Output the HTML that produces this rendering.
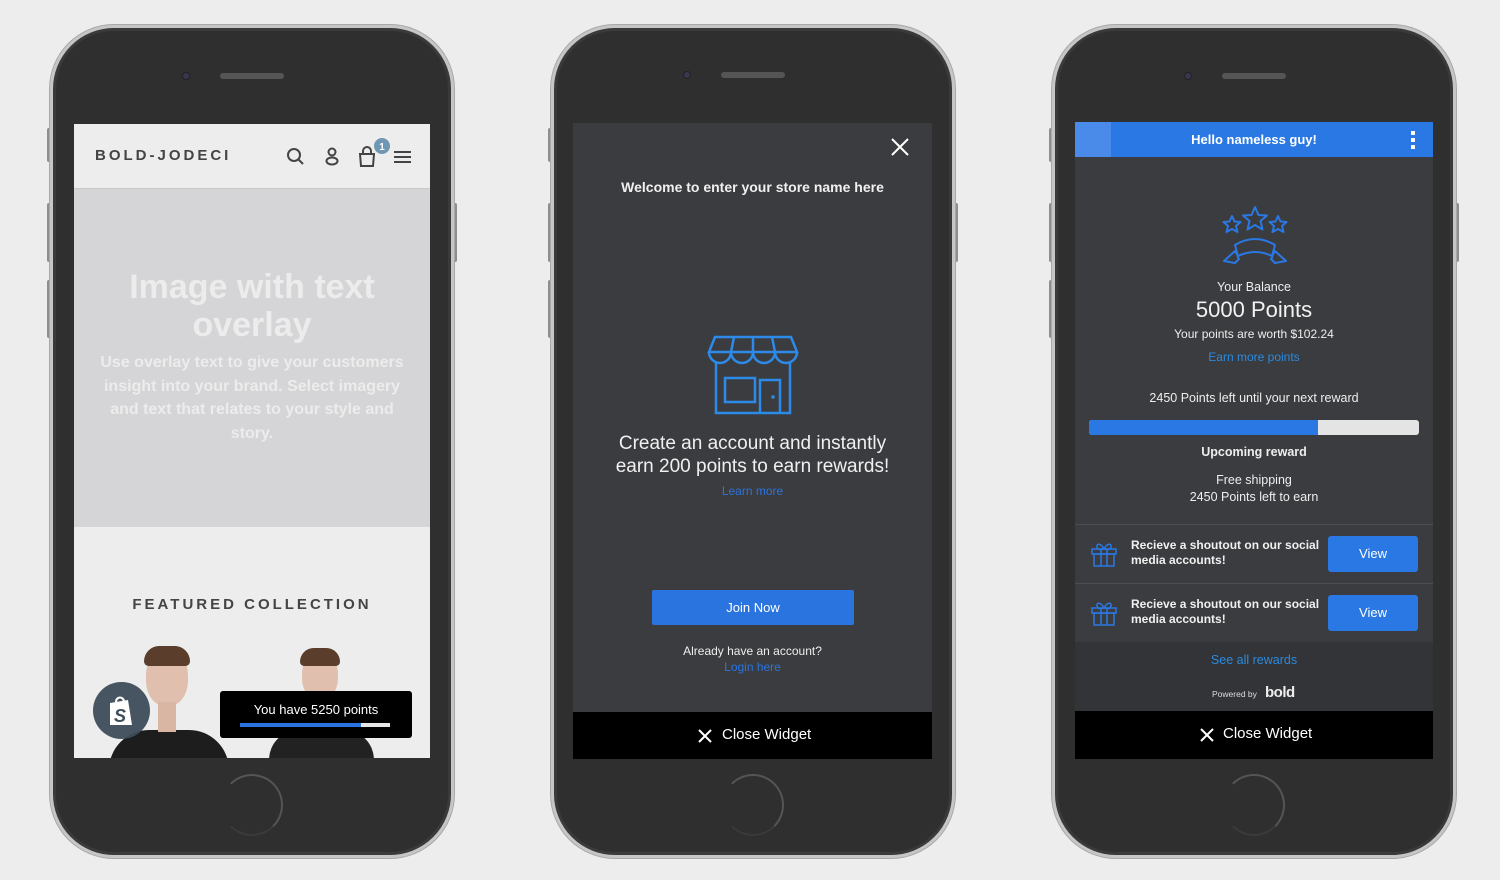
<!DOCTYPE html>
<html><head><meta charset="utf-8"><style>
*{margin:0;padding:0;box-sizing:border-box}
body{width:1500px;height:880px;background:#ededed;position:relative;overflow:hidden;font-family:"Liberation Sans",sans-serif}
.a{position:absolute}
.phone{position:absolute;width:404px;height:833px;border-radius:64px;background:#2f2f2f;border:3px solid #c6c6c6;box-shadow:0 0 0 1px #a9a9a9,inset 0 0 0 3px #3a3a3a}
.btn{position:absolute;background:#8e8e8e;width:4px;border-radius:2px}
.cam{position:absolute;width:8px;height:8px;border-radius:50%;background:#3a3550;border:1px solid #222}
.spk{position:absolute;width:64px;height:6px;border-radius:3px;background:#555}
.home{position:absolute;width:62px;height:62px;border-radius:50%;border:2px solid #555;border-left-color:#2f2f2f;border-bottom-color:#3a3a3a}
.c{text-align:center;color:#eee}
</style></head><body>

<!-- PHONE 1 -->
<div class="btn" style="left:47px;top:128px;height:34px"></div>
<div class="btn" style="left:47px;top:203px;height:59px"></div>
<div class="btn" style="left:47px;top:280px;height:58px"></div>
<div class="btn" style="left:453px;top:203px;height:59px"></div>
<div class="phone" style="left:50px;top:25px"></div>
<div class="cam" style="left:182px;top:72px"></div>
<div class="spk" style="left:220px;top:73px"></div>
<div class="home" style="left:221px;top:774px"></div>
<div class="a" style="left:74px;top:124px;width:356px;height:634px;background:#ededed;overflow:hidden">
  <div class="a" style="left:21px;top:23px;font-size:15px;font-weight:bold;letter-spacing:3px;color:#444">BOLD-JODECI</div>
  <svg class="a" style="left:210px;top:14px" width="130" height="32" viewBox="0 -6 130 32">
    <g fill="none" stroke="#444" stroke-width="2">
      <circle cx="10" cy="11" r="6"/><path d="M14.5 15.5L19 20"/>
      <circle cx="48" cy="8" r="3.5"/><ellipse cx="48" cy="17" rx="5.5" ry="3.5"/>
      <path d="M76 10h14l-1 12H77z M79 10v-3a4 4 0 0 1 8 0v3"/>
      <path d="M110 8h17M110 13h17M110 18h17"/>
    </g>
    <circle cx="98" cy="2" r="8" fill="#6f97b3"/>
    <text x="98" y="6" font-size="10" fill="#fff" text-anchor="middle" font-weight="bold" font-family="Liberation Sans">1</text>
  </svg>
  <div class="a" style="left:0;top:64px;width:356px;height:339px;background:#d5d5d7;border-top:1px solid #c8c8c8"></div>
  <div class="a c" style="left:0;top:144px;width:356px;font-size:34px;font-weight:bold;line-height:38px;color:#ececec">Image with text<br>overlay</div>
  <div class="a c" style="left:14px;top:227px;width:328px;font-size:16px;font-weight:bold;line-height:23.5px;color:#ececec">Use overlay text to give your customers insight into your brand. Select imagery and text that relates to your style and story.</div>
  <div class="a c" style="left:0;top:472px;width:356px;font-size:15px;font-weight:bold;letter-spacing:3px;color:#444">FEATURED COLLECTION</div>
  <!-- people -->
  <div class="a" style="left:35px;top:606px;width:120px;height:40px;border-radius:40px 40px 0 0;background:#1d1d1d"></div>
  <div class="a" style="left:72px;top:526px;width:42px;height:56px;border-radius:45%;background:#e0bfae"></div>
  <div class="a" style="left:70px;top:522px;width:46px;height:20px;border-radius:20px 20px 6px 6px;background:#5a3e2b"></div>
  <div class="a" style="left:84px;top:578px;width:18px;height:30px;background:#d9b5a3"></div>
  <div class="a" style="left:195px;top:606px;width:105px;height:40px;border-radius:30px 30px 0 0;background:#222"></div>
  <div class="a" style="left:228px;top:528px;width:36px;height:48px;border-radius:45%;background:#e0bfae"></div>
  <div class="a" style="left:226px;top:524px;width:40px;height:18px;border-radius:20px 20px 6px 6px;background:#5a3e2b"></div>
  <div class="a" style="left:19px;top:558px;width:57px;height:57px;border-radius:50%;background:#3d4d5a;opacity:.95"></div>
  <svg class="a" style="left:32px;top:570px" width="30" height="34" viewBox="0 0 30 34"><path d="M4 9l18-3 4 25-22 0z" fill="#fff"/><path d="M10 8c0-6 8-6 8 0" stroke="#fff" stroke-width="2" fill="none"/><text x="14" y="28" font-size="18" font-weight="bold" fill="#3d4d5a" text-anchor="middle" font-style="italic" font-family="Liberation Sans">S</text></svg>
  <div class="a" style="left:146px;top:567px;width:192px;height:47px;background:#000;border-radius:3px"></div>
  <div class="a c" style="left:146px;top:578px;width:192px;font-size:13px;color:#fff">You have 5250 points</div>
  <div class="a" style="left:166px;top:599px;width:150px;height:4px;background:#e5e5e5"></div>
  <div class="a" style="left:166px;top:599px;width:121px;height:4px;background:#2a74e0"></div>
</div>

<!-- PHONE 2 -->
<div class="btn" style="left:548px;top:128px;height:34px"></div>
<div class="btn" style="left:548px;top:203px;height:59px"></div>
<div class="btn" style="left:548px;top:280px;height:58px"></div>
<div class="btn" style="left:954px;top:203px;height:59px"></div>
<div class="phone" style="left:551px;top:25px"></div>
<div class="cam" style="left:683px;top:71px"></div>
<div class="spk" style="left:721px;top:72px"></div>
<div class="home" style="left:722px;top:774px"></div>
<div class="a" style="left:573px;top:123px;width:359px;height:636px;background:#3b3c3f;overflow:hidden">
  <svg class="a" style="left:318px;top:15px" width="18" height="18"><path d="M1 1L17 17M17 1L1 17" stroke="#fff" stroke-width="2"/></svg>
  <div class="a c" style="left:0;top:56px;width:359px;font-size:14px;font-weight:bold;color:#f0f0f0">Welcome to enter your store name here</div>
  <svg class="a" style="left:134px;top:212px" width="92" height="80" viewBox="0 0 92 80"><g fill="none" stroke="#2d8ae8" stroke-width="2.5">
    <path d="M8 2h76l6 15H2z M2 17a11 11 0 0 0 22 0a11 11 0 0 0 22 0a11 11 0 0 0 22 0a11 11 0 0 0 22 0 M24 17l3-15M46 17V2M68 17l-3-15"/>
    <path d="M9 27v51h74V27"/><rect x="18" y="43" width="30" height="24"/><path d="M53 78V45h20v33"/></g>
    <circle cx="66" cy="62" r="1.8" fill="#2d8ae8"/></svg>
  <div class="a c" style="left:0;top:309px;width:359px;font-size:19px;line-height:23px;color:#f0f0f0">Create an account and instantly<br>earn 200 points to earn rewards!</div>
  <div class="a c" style="left:0;top:361px;width:359px;font-size:12px;color:#2a74e0">Learn more</div>
  <div class="a c" style="left:79px;top:467px;width:202px;height:35px;background:#2a74e0;border-radius:2px;font-size:13px;line-height:35px;color:#fff">Join Now</div>
  <div class="a c" style="left:0;top:520px;width:359px;font-size:12px;line-height:16px;color:#eee">Already have an account?<br><span style="color:#2a74e0">Login here</span></div>
  <div class="a" style="left:0;top:589px;width:359px;height:47px;background:#000"></div>
  <svg class="a" style="left:125px;top:606px" width="14" height="14"><path d="M1 1L13 13M13 1L1 13" stroke="#fff" stroke-width="2"/></svg>
  <div class="a" style="left:149px;top:603px;font-size:15px;color:#fff">Close Widget</div>
</div>

<!-- PHONE 3 -->
<div class="btn" style="left:1049px;top:128px;height:34px"></div>
<div class="btn" style="left:1049px;top:203px;height:59px"></div>
<div class="btn" style="left:1049px;top:280px;height:58px"></div>
<div class="btn" style="left:1455px;top:203px;height:59px"></div>
<div class="phone" style="left:1052px;top:25px"></div>
<div class="cam" style="left:1184px;top:72px"></div>
<div class="spk" style="left:1222px;top:73px"></div>
<div class="home" style="left:1223px;top:774px"></div>
<div class="a" style="left:1075px;top:122px;width:358px;height:637px;background:#3b3c3f;overflow:hidden">
  <div class="a" style="left:0;top:0;width:358px;height:35px;background:#2a78e4"></div>
  <div class="a" style="left:0;top:0;width:36px;height:35px;background:#4a8ae8"></div>
  <div class="a c" style="left:0;top:10px;width:358px;font-size:13px;font-weight:bold;color:#fff">Hello nameless guy!</div>
  <div class="a" style="left:336px;top:9px;width:4px;height:4px;background:#fff"></div>
  <div class="a" style="left:336px;top:16px;width:4px;height:4px;background:#fff"></div>
  <div class="a" style="left:336px;top:23px;width:4px;height:4px;background:#fff"></div>
  <svg class="a" style="left:145px;top:83px" width="70" height="68" viewBox="0 0 70 68"><g fill="none" stroke="#2a78e4" stroke-width="2" stroke-linejoin="round">
    <path d="M35 2l3.5 8 8.5 .5-6.5 5.5 2 8.5-7.5-4.5-7.5 4.5 2-8.5-6.5-5.5 8.5-.5z"/>
    <path d="M12 11l2.5 5.5 6 .5-4.5 4 1.5 6-5.5-3-5.5 3 1.5-6-4.5-4 6-.5z"/>
    <path d="M58 11l2.5 5.5 6 .5-4.5 4 1.5 6-5.5-3-5.5 3 1.5-6-4.5-4 6-.5z"/>
    <path d="M15 40q20-12 40 0l-3 11q-17-8-34 0z M18 51l-3-5-11 10 11 2 4-4q-2-2-1-3 M52 51l3-5 11 10-11 2-4-4q2-2 1-3"/></g></svg>
  <div class="a c" style="left:0;top:158px;width:358px;font-size:12.5px;color:#eee">Your Balance</div>
  <div class="a c" style="left:0;top:175px;width:358px;font-size:22px;color:#f2f2f2">5000 Points</div>
  <div class="a c" style="left:0;top:205px;width:358px;font-size:12px;color:#eee">Your points are worth $102.24</div>
  <div class="a c" style="left:0;top:228px;width:358px;font-size:12px;color:#2a8ae0">Earn more points</div>
  <div class="a c" style="left:0;top:269px;width:358px;font-size:12.5px;color:#eee">2450 Points left until your next reward</div>
  <div class="a" style="left:14px;top:298px;width:330px;height:15px;border-radius:3px;background:#e4e4e4;overflow:hidden"><div style="width:229px;height:15px;background:#2a78e4"></div></div>
  <div class="a c" style="left:0;top:323px;width:358px;font-size:12.5px;font-weight:bold;color:#eee">Upcoming reward</div>
  <div class="a c" style="left:0;top:350px;width:358px;font-size:12.5px;line-height:17px;color:#eee">Free shipping<br>2450 Points left to earn</div>
  <div class="a" style="left:0;top:402px;width:358px;height:1px;background:#4d4e52"></div>
  <div class="a" style="left:0;top:461px;width:358px;height:1px;background:#4d4e52"></div>
  <div class="a" style="left:0;top:520px;width:358px;height:70px;background:#333437"></div>
  <svg class="a" style="left:16px;top:419px" width="26" height="26" viewBox="0 0 26 26"><g fill="none" stroke="#2a78e4" stroke-width="1.5"><rect x="1" y="8" width="24" height="5"/><rect x="3" y="13" width="20" height="12"/><path d="M10 8v17M16 8v17M13 8c-3-6-8-6-7-2s5 2 7 2c2 0 6 2 7-2s-4-4-7 2"/></g></svg>
  <svg class="a" style="left:16px;top:478px" width="26" height="26" viewBox="0 0 26 26"><g fill="none" stroke="#2a78e4" stroke-width="1.5"><rect x="1" y="8" width="24" height="5"/><rect x="3" y="13" width="20" height="12"/><path d="M10 8v17M16 8v17M13 8c-3-6-8-6-7-2s5 2 7 2c2 0 6 2 7-2s-4-4-7 2"/></g></svg>
  <div class="a" style="left:56px;top:416px;font-size:12px;font-weight:bold;line-height:15px;color:#f0f0f0">Recieve a shoutout on our social<br>media accounts!</div>
  <div class="a" style="left:56px;top:475px;font-size:12px;font-weight:bold;line-height:15px;color:#f0f0f0">Recieve a shoutout on our social<br>media accounts!</div>
  <div class="a c" style="left:253px;top:414px;width:90px;height:36px;background:#2a78e4;border-radius:3px;font-size:13px;line-height:36px;color:#fff">View</div>
  <div class="a c" style="left:253px;top:473px;width:90px;height:36px;background:#2a78e4;border-radius:3px;font-size:13px;line-height:36px;color:#fff">View</div>
  <div class="a c" style="left:0;top:531px;width:358px;font-size:12.5px;color:#2a8ae0">See all rewards</div>
  <div class="a" style="left:137px;top:567px;font-size:8.5px;color:#ddd">Powered by</div>
  <div class="a" style="left:190px;top:562px;font-size:15px;font-weight:bold;color:#eee;letter-spacing:-0.5px">bold</div>
  <div class="a" style="left:0;top:589px;width:358px;height:48px;background:#000"></div>
  <svg class="a" style="left:125px;top:606px" width="14" height="14"><path d="M1 1L13 13M13 1L1 13" stroke="#fff" stroke-width="2"/></svg>
  <div class="a" style="left:148px;top:603px;font-size:15px;color:#fff">Close Widget</div>
</div>
</body></html>
